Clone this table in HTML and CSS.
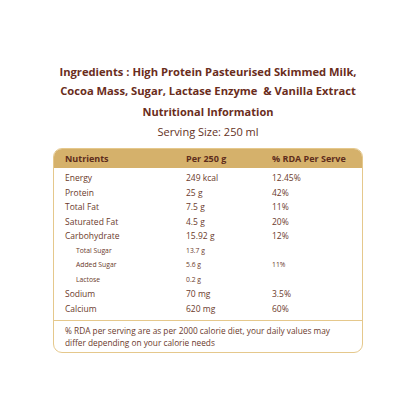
FILE: index.html
```html
<!DOCTYPE html>
<html lang="en">
<head>
    <meta charset="UTF-8">
    <title>Nutritional Information</title>
    <link rel="stylesheet" href="styles.css">
</head>
<body>
    <div class="page">
        <h1 class="ingredients">Ingredients : High Protein Pasteurised Skimmed Milk,<br>Cocoa Mass, Sugar, Lactase Enzyme &nbsp;&amp; Vanilla Extract</h1>
        <h2 class="title">Nutritional Information</h2>
        <p class="serving">Serving Size: 250 ml</p>

        <div class="card">
            <div class="row head">
                <span>Nutrients</span>
                <span>Per 250 g</span>
                <span>% RDA Per Serve</span>
            </div>
            <div class="rows">
                <div class="row"><span>Energy</span><span>249 kcal</span><span>12.45%</span></div>
                <div class="row"><span>Protein</span><span>25 g</span><span>42%</span></div>
                <div class="row"><span>Total Fat</span><span>7.5 g</span><span>11%</span></div>
                <div class="row"><span>Saturated Fat</span><span>4.5 g</span><span>20%</span></div>
                <div class="row"><span>Carbohydrate</span><span>15.92 g</span><span>12%</span></div>
                <div class="row sub"><span>Total Sugar</span><span>13.7 g</span><span></span></div>
                <div class="row sub"><span>Added Sugar</span><span>5.6 g</span><span>11%</span></div>
                <div class="row sub"><span>Lactose</span><span>0.2 g</span><span></span></div>
                <div class="row"><span>Sodium</span><span>70 mg</span><span>3.5%</span></div>
                <div class="row"><span>Calcium</span><span>620 mg</span><span>60%</span></div>
            </div>
            <p class="note">% RDA per serving are as per 2000 calorie diet, your daily values may differ depending on your calorie needs</p>
        </div>
    </div>
</body>
</html>
```

FILE: styles.css
```css
body {
    margin: 0;
    background: #ffffff;
    font-family: "Open Sans", "Noto Sans", sans-serif;
    color: #6b3a2c;
}
.page {
    width: 416px;
    padding-top: 62px;
}
.ingredients {
    margin: 0;
    text-align: center;
    font-size: 11.2px;
    line-height: 19px;
    font-weight: 700;
    color: #6a2d1c;
}
.title {
    margin: 3px 0 0;
    text-align: center;
    font-size: 11px;
    line-height: 18px;
    font-weight: 700;
    color: #6a2d1c;
}
.serving {
    margin: 3px 0 0;
    text-align: center;
    font-size: 11px;
    line-height: 16px;
    color: #643224;
}
.card {
    margin: 8px 0 0 53px;
    width: 308px;
    border: 1px solid #e5c88c;
    border-radius: 9px;
    overflow: hidden;
}
.row {
    display: grid;
    grid-template-columns: 121px 86px 1fr;
    padding-left: 11px;
    font-size: 8.5px;
    line-height: 14.5px;
}
.row.head {
    background: #d5b16b;
    font-weight: 700;
    font-size: 9px;
    line-height: 19px;
    color: #5e2d1c;
}
.rows {
    padding: 3px 0 4px;
    border-bottom: 1px solid #e5c88c;
}
.row.sub {
    font-size: 6.8px;
}
.row.sub span:first-child {
    padding-left: 11px;
}
.note {
    margin: 0;
    padding: 4px 14px 3px 11px;
    font-size: 8.3px;
    line-height: 12px;
}
```
